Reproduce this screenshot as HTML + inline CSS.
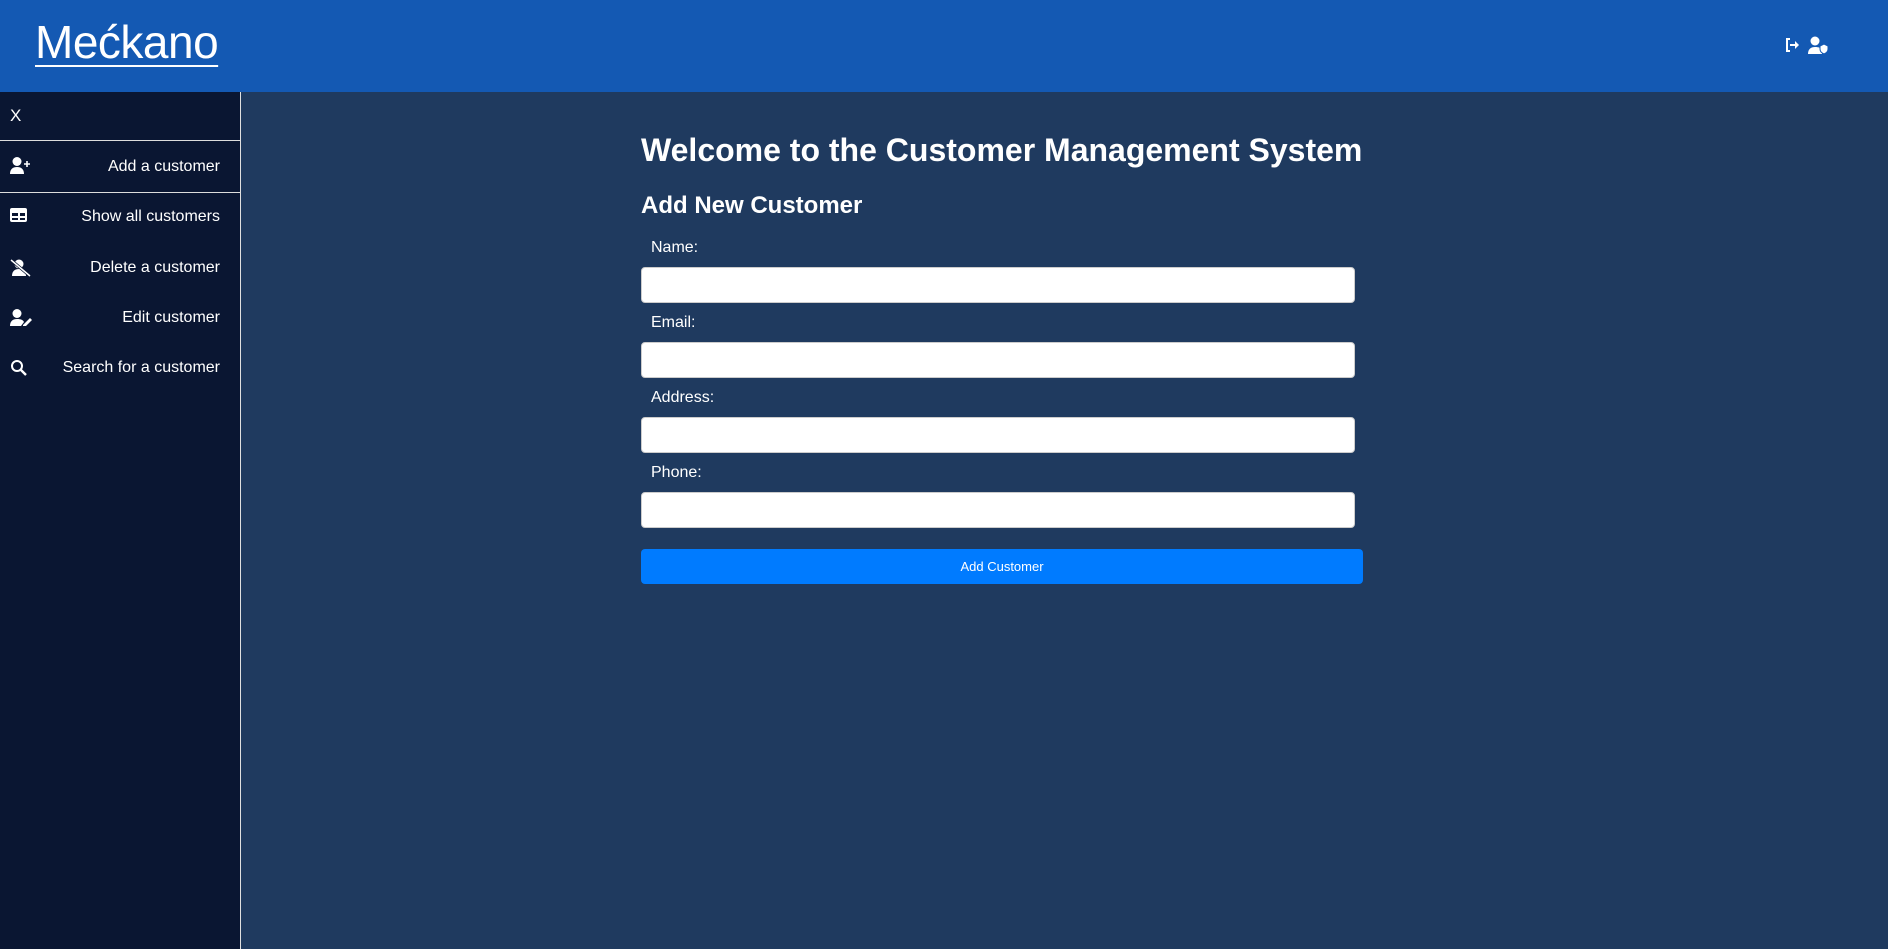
<!DOCTYPE html>
<html><head><meta charset="utf-8"><style>
*{box-sizing:border-box;margin:0;padding:0}
body{width:1888px;height:949px;overflow:hidden;background:#1f3a5f;font-family:"Liberation Sans",Arial,sans-serif;color:#fff;position:relative}
.hdr{position:absolute;left:0;top:0;width:1888px;height:92px;background:#1459b3}
.logo{position:absolute;left:35px;top:16px;font-family:"Liberation Sans",sans-serif;font-size:46px;line-height:52px;text-decoration:underline;text-decoration-thickness:2px;text-underline-offset:7px;letter-spacing:-0.5px}
.side{position:absolute;left:0;top:92px;width:241px;height:857px;background:#0a1632;border-right:1px solid #e0e0e0}
.x{position:absolute;left:10px;top:14px;font-size:17px}
.item{position:absolute;left:0;width:240px;height:50px;display:flex;align-items:center;justify-content:flex-end;padding-right:20px;font-size:16px}
.item svg{position:absolute;left:10px;top:16px}
.sel{border-top:1px solid #ddd;border-bottom:1px solid #ddd;height:53px}
h1{position:absolute;left:641px;top:132px;font-size:32px;font-weight:bold}
h2{position:absolute;left:641px;top:192px;font-size:24px;font-weight:bold}
.lbl{position:absolute;left:651px;font-size:16px}
.inp{position:absolute;left:641px;width:714px;height:36px;background:#fff;border-radius:4px;border:1px solid #ccc}
.btn{position:absolute;left:641px;top:549px;width:722px;height:35px;background:#007bff;border-radius:4px;font-size:13px;display:flex;align-items:center;justify-content:center}
</style></head><body>
<div class="hdr"><div class="logo">Mećkano</div>
<svg style="position:absolute;left:1785px;top:38px" width="15" height="14" viewBox="0 0 15 14"><path d="M5 1H2v12h3" fill="none" stroke="#fff" stroke-width="2"/><path d="M5 6h5V3l4 4-4 4V8H5z" fill="#fff"/></svg>
<svg style="position:absolute;left:1808px;top:36px" width="22" height="18" viewBox="0 0 22 18"><circle cx="7" cy="5" r="4.5" fill="#fff"/><path d="M0 18c0-5 3-7 7-7s6 1 7 3v4z" fill="#fff"/><path d="M12 10l4-2 4 2v3c0 3-2 4-4 5-2-1-4-2-4-5z" fill="#fff" stroke="#1459b3" stroke-width="1"/></svg>
</div>
<div class="side">
<div class="x">X</div>
<div class="item sel" style="top:48px"><svg width="22" height="17" viewBox="0 0 22 17"><circle cx="7" cy="4.5" r="4.5" fill="#fff"/><path d="M0 17c0-5 3-7 7-7s7 2 7 7z" fill="#fff"/><path d="M17 4v6M14 7h6" stroke="#fff" stroke-width="1.6"/></svg>Add a customer</div>
<div class="item" style="top:100px"><svg width="18" height="15" viewBox="0 0 18 15"><rect x="0" y="0" width="17" height="14" rx="2" fill="#fff"/><path d="M2 5h6v3H2zM10 5h5v3h-5zM2 10h6v2H2zM10 10h5v2h-5z" fill="#0a1632"/></svg>Show all customers</div>
<div class="item" style="top:151px"><svg width="22" height="18" viewBox="0 0 22 18"><circle cx="9" cy="5" r="4.5" fill="#fff"/><path d="M2 17c0-5 3-7 7-7s7 2 7 7z" fill="#fff"/><path d="M1 1l19 16" stroke="#0a1632" stroke-width="3"/><path d="M1 1l19 16" stroke="#fff" stroke-width="1.5"/></svg>Delete a customer</div>
<div class="item" style="top:201px"><svg width="22" height="17" viewBox="0 0 22 17"><circle cx="7" cy="4.5" r="4.5" fill="#fff"/><path d="M0 17c0-5 3-7 7-7s6 1 7 3l-3 4z" fill="#fff"/><path d="M13 16l7-7 2 2-7 7h-2z" fill="#fff"/></svg>Edit customer</div>
<div class="item" style="top:251px"><svg width="18" height="18" viewBox="0 0 18 18"><circle cx="7" cy="7" r="5" fill="none" stroke="#fff" stroke-width="2"/><path d="M11 11l5 5" stroke="#fff" stroke-width="2.4"/></svg>Search for a customer</div>
</div>
<h1>Welcome to the Customer Management System</h1>
<h2>Add New Customer</h2>
<div class="lbl" style="top:239px">Name:</div><div class="inp" style="top:267px"></div>
<div class="lbl" style="top:314px">Email:</div><div class="inp" style="top:342px"></div>
<div class="lbl" style="top:389px">Address:</div><div class="inp" style="top:417px"></div>
<div class="lbl" style="top:464px">Phone:</div><div class="inp" style="top:492px"></div>
<div class="btn">Add Customer</div>
</body></html>
